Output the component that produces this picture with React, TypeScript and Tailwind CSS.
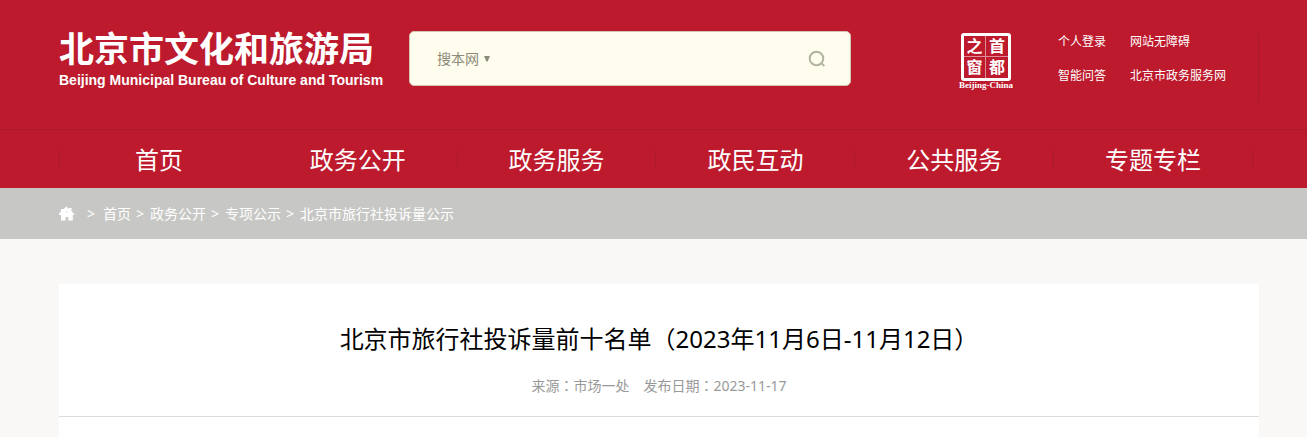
import { useState } from 'react';

const NAV_ITEMS = [
  { label: '首页', divider: false },
  { label: '政务公开', divider: true },
  { label: '政务服务', divider: true },
  { label: '政民互动', divider: true },
  { label: '公共服务', divider: true },
  { label: '专题专栏', divider: true },
];

const CRUMBS = ['首页', '政务公开', '专项公示', '北京市旅行社投诉量公示'];

// Full-width colon centred in its cell
function Colon() {
  return <span className="font-['Noto_Sans_CJK_TC',sans-serif] leading-none">：</span>;
}

function SiteLogo() {
  return (
    <a href="#" className="block w-[350px] shrink-0 pt-[27px] text-white">
      <span className="block whitespace-nowrap text-[35px] leading-[43px] font-bold">
        北京市文化和旅游局
      </span>
      <span className="block whitespace-nowrap font-['Liberation_Sans',Arial,sans-serif] text-[14px] leading-5 font-bold">
        Beijing Municipal Bureau of Culture and Tourism
      </span>
    </a>
  );
}

function SearchBar() {
  const [keyword, setKeyword] = useState('');

  return (
    <form
      className="mt-[31px] flex h-[55px] w-[442px] shrink-0 items-center rounded-[5px] border border-[#d3c3b0] bg-[#fffded] pr-6 pl-[27px]"
      onSubmit={(e) => e.preventDefault()}
    >
      <div className="relative">
        <select
          aria-label="搜索范围"
          className="block w-14 cursor-pointer appearance-none bg-transparent text-sm text-[#8b8b7a] outline-none"
        >
          <option>搜本网</option>
        </select>
        <svg
          viewBox="0 0 6 6"
          className="pointer-events-none absolute top-[7px] right-[3px] h-1.5 w-1.5"
          fill="#8b8b7a"
        >
          <path d="M0 0h6L3.6 5.5H2.4z" />
        </svg>
      </div>
      <input
        type="text"
        aria-label="搜索关键词"
        value={keyword}
        onChange={(e) => setKeyword(e.target.value)}
        className="h-10 min-w-0 flex-1 bg-transparent px-3 text-sm text-[#555] outline-none"
      />
      <button type="submit" aria-label="搜索" className="cursor-pointer">
        <svg
          viewBox="0 0 18 18"
          className="block h-[18px] w-[18px]"
          fill="none"
          stroke="#b3b3a2"
          strokeWidth="2"
        >
          <circle cx="8.5" cy="8.5" r="6.8" />
          <path d="M12.8 12.8l3.6 3.2" />
        </svg>
      </button>
    </form>
  );
}

function CapitalWindow() {
  return (
    <a href="#" className="mt-[33px] ml-auto flex w-[54px] shrink-0 flex-col items-center text-white">
      <span className="grid h-12 w-[50px] grid-cols-2 grid-rows-2 rounded-[3px] border-[3px] border-white text-center text-base leading-5 font-bold">
        <span className="border-r border-b border-white/50">之</span>
        <span className="border-b border-white/50">首</span>
        <span className="border-r border-white/50">窗</span>
        <span>都</span>
      </span>
      <span className="whitespace-nowrap font-['Liberation_Serif',serif] text-[9px] leading-[9px] font-bold">
        Beijing-China
      </span>
    </a>
  );
}

function QuickLinks() {
  return (
    <div className="mt-[33px] ml-[45px] h-[69px] w-[201px] shrink-0 border-r border-[#a91a2a]">
      <div className="grid grid-cols-[72px_auto] gap-y-4 text-xs leading-[18px] text-white">
        <a href="#">个人登录</a>
        <a href="#">网站无障碍</a>
        <a href="#">智能问答</a>
        <a href="#">北京市政务服务网</a>
      </div>
    </div>
  );
}

function MainNav() {
  return (
    <nav className="border-t border-[#a91a2a] pl-[11px]">
      <ul className="mx-auto flex h-[58px] max-w-[1200px] items-center pr-1.5">
        {NAV_ITEMS.map((item, i) => (
          <li
            key={item.label}
            className={`flex h-[18px] w-0 flex-1 items-center justify-center border-r ${
              item.divider ? 'border-[#a91a2a]' : 'border-r-transparent'
            } ${i === 0 ? 'border-l border-l-[#a91a2a]' : ''}`}
          >
            <a href="#" className="whitespace-nowrap pt-0.5 text-2xl text-white">
              {item.label}
            </a>
          </li>
        ))}
      </ul>
    </nav>
  );
}

function Breadcrumb() {
  return (
    <div className="bg-[#c7c7c5] pl-[11px]">
      <div className="mx-auto flex h-[51px] max-w-[1200px] items-center text-sm text-white">
        <a href="#" aria-label="首页" className="mr-3">
          <svg viewBox="0 0 16 16" className="block h-4 w-4" fill="currentColor">
            <path
              fillRule="evenodd"
              d="M7.500 0.500L10 3V2h2.500v3.300L15.300 8v1H13.800v5.500H9.300V11H6.500v3.500H2V9H0V7.500L2 5.500V3h2.500zM7 5.500v1h1.200v-1z"
            />
          </svg>
        </a>
        {CRUMBS.map((crumb, i) => (
          <span key={crumb} className="flex items-center">
            <span className={i === 0 ? 'mr-2' : 'mr-1.5 ml-[5px]'}>&gt;</span>
            <a href="#">{crumb}</a>
          </span>
        ))}
      </div>
    </div>
  );
}

export default function App() {
  return (
    <div className="flex min-h-screen flex-col bg-[#f9f8f6] font-['Noto_Sans','Noto_Sans_CJK_SC',sans-serif]">
      <header className="bg-[#bd1a2d]">
        <div className="pl-[11px]">
          <div className="mx-auto flex h-[129px] max-w-[1200px] items-start">
            <SiteLogo />
            <SearchBar />
            <CapitalWindow />
            <QuickLinks />
          </div>
        </div>
        <MainNav />
      </header>
      <Breadcrumb />
      <main className="flex flex-1 pt-[45px] pl-[11px]">
        <article className="mx-auto w-full max-w-[1200px] bg-white">
          <div className="border-b border-[#dcdcdc] pt-9 pb-5 text-center">
            <h1 className="text-2xl leading-[38px] text-black">
              北京市旅行社投诉量前十名单（2023年11月6日-11月12日）
            </h1>
            <p className="mt-[18px] flex justify-center gap-3.5 text-sm leading-5 text-[#999]">
              <span>
                来源
                <Colon />
                市场一处
              </span>
              <span>
                发布日期
                <Colon />
                2023-11-17
              </span>
            </p>
          </div>
        </article>
      </main>
    </div>
  );
}
